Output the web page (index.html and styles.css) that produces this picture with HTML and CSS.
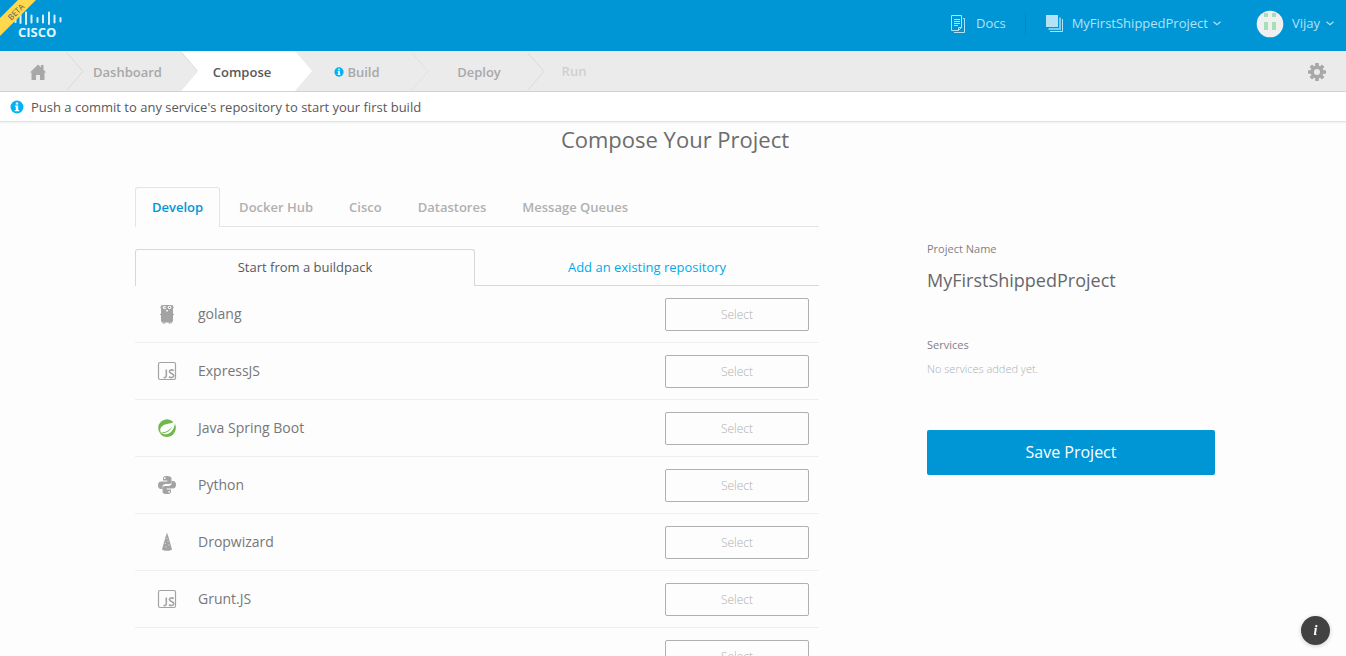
FILE: index.html
```html
<!DOCTYPE html>
<html lang="en">
<head>
<meta charset="utf-8">
<meta name="viewport" content="width=device-width, initial-scale=1">
<title>Compose Your Project</title>
<link rel="stylesheet" href="styles.css">
</head>
<body>
<svg class="sprite" aria-hidden="true">
  <symbol id="chevron" viewBox="0 0 18 39"><path d="M0.500 0.500 17 19.500 0.500 38.500"/></symbol>
  <symbol id="caret" viewBox="0 0 8 5"><path d="M0.500 0.800 4 3.800 7.500 0.800" fill="none" stroke="currentColor" stroke-width="1.200"/></symbol>
  <symbol id="info" viewBox="0 0 14 14"><circle cx="7" cy="7" r="6.500" fill="#00b3f4"/><path d="M5.800 2.500h2.400v2H5.800zM5 5.500h3.200V10H9.200v1.300H4.800V10H5.800V6.800H5z" fill="#fff"/></symbol>
  <symbol id="js" viewBox="0 0 20 20"><rect x="1.500" y="1.500" width="17" height="17" rx="1.500" fill="none" stroke="#a3a3a3" stroke-width="1.200"/><path d="M9.300 8.600v6.200q0 2.200-2.800 1.700M16.700 9.500c-1.600-1-4.300-.7-4.300 1.100 0 2.100 4.400 1.500 4.400 3.900 0 2.200-3 2.500-4.900 1.300" fill="none" stroke="#a3a3a3" stroke-width="1.600"/></symbol>
</svg>
<header class="topbar">
  <a class="brand" href="#" aria-label="Cisco">
    <svg width="66" height="44" viewBox="0 0 66 44">
      <path d="M15.500 18v4M20.500 15v8M26 12.500v11.500M31.500 15.500v7M37.500 18v4M43 15.500v7M49 12.500v11.500M54.500 15.500v7M60.500 18v3.500" stroke="#d9f0fa" stroke-width="2" stroke-linecap="round"/>
      <text class="brand-name" x="18" y="37">CISCO</text>
      <path d="M0 18 18 0H36L0 36Z" fill="#ffd84d"/>
      <text class="beta" transform="translate(18 14) rotate(-45)" text-anchor="middle">BETA</text>
    </svg>
  </a>
  <nav class="account" aria-label="Account">
    <a class="account-link docs" href="#">
      <svg width="16" height="20" viewBox="0 0 16 20" fill="none" stroke="#b3e1f5"><path d="M1.500 1.500h10v12l-3 3h-7zM8.500 16.500v-3h3M13 4.500h1.500v14H4"/><path d="M4 5.500h6M4 7.500h6M4 9.500h6M4 11.500h4"/></svg>
      <span>Docs</span>
    </a>
    <a class="account-link project" href="#">
      <svg width="17" height="17" viewBox="0 0 17 17"><path d="M14 2.500V14H2.500" fill="none" stroke="#80cbea" stroke-width="2"/><path d="M0 0h12v12H0z" fill="#b3e1f5"/><path d="M16.500 4v12.500H4" fill="none" stroke="#b3e1f5"/></svg>
      <span>MyFirstShippedProject</span>
      <svg class="caret" width="8" height="5"><use href="#caret"/></svg>
    </a>
    <a class="account-link user" href="#">
      <svg width="28" height="28" viewBox="0 0 28 28"><circle cx="14" cy="14" r="13.300" fill="#f0f0f0"/><path d="M8 3h4v4H8zM16 3h4v4h-4zM8 12h4v8H8zM16 12h4v8h-4z" fill="#a5dfb7"/></svg>
      <span>Vijay</span>
      <svg class="caret" width="8" height="5"><use href="#caret"/></svg>
    </a>
  </nav>
</header>
<nav class="steps" aria-label="Project steps">
  <a class="step home" href="#" aria-label="Home">
    <svg width="16" height="16" viewBox="0 0 16 16" fill="#a8a8a8"><path d="M8 0.500 11 3.300V1h2.500v4.500L16 8.500h-1.500V16H10v-5H6v5H1.500V8.500H0z"/></svg>
    <svg class="sep" width="18" height="39"><use href="#chevron"/></svg>
  </a>
  <a class="step" href="#">Dashboard<svg class="sep" width="18" height="39"><use href="#chevron"/></svg></a>
  <a class="step current" href="#" aria-current="step">Compose</a>
  <a class="step build" href="#"><svg width="10" height="10"><use href="#info"/></svg>Build<svg class="sep light" width="18" height="39"><use href="#chevron"/></svg></a>
  <a class="step deploy" href="#">Deploy<svg class="sep" width="18" height="39"><use href="#chevron"/></svg></a>
  <a class="step run" href="#">Run</a>
  <button class="settings" type="button" aria-label="Settings">
    <svg width="18" height="18" viewBox="-9 -9 18 18"><g stroke="#a8a8a8" stroke-width="3.600"><path d="M0-9V9M-9 0H9M-6.200-6.200 6.200 6.200M6.200-6.200-6.200 6.200"/></g><circle r="6.500" fill="#a8a8a8"/><circle r="3" fill="#ebebeb"/></svg>
  </button>
</nav>
<div class="notice" role="status">
  <svg width="14" height="14"><use href="#info"/></svg>
  <span>Push a commit to any service's repository to start your first build</span>
</div>
<main class="page">
  <h1>Compose Your Project</h1>
  <div class="columns">
    <section class="catalog">
      <nav class="tabs" aria-label="Service types">
        <a class="tab active" href="#">Develop</a>
        <a class="tab" href="#">Docker Hub</a>
        <a class="tab" href="#">Cisco</a>
        <a class="tab" href="#">Datastores</a>
        <a class="tab" href="#">Message Queues</a>
      </nav>
      <div class="sources">
        <a class="source active" href="#">Start from a buildpack</a>
        <a class="source" href="#">Add an existing repository</a>
      </div>
      <ul class="packs">
        <li class="pack">
          <svg width="20" height="20" viewBox="0 0 20 20"><path d="M4 1.500 6 1h8l2 .5.500 2-.5 1.500V17l-1 1.500H5L4 17V5l-.5-1.500z" fill="#a3a3a3"/><path d="M3 10.500h14M5.500 19h3M11.500 19h3" stroke="#a3a3a3"/><circle cx="7.500" cy="3.500" r="1.800" fill="#f0f0f0"/><circle cx="12.500" cy="3.500" r="1.800" fill="#f0f0f0"/><path d="M9 5.500h2v2H9z" fill="#eee"/><path d="M7.500 3h1v1h-1zM12 3h1v1h-1zM9.500 5h1v1h-1z" fill="#888"/></svg>
          <span>golang</span><button class="select" type="button">Select</button>
        </li>
        <li class="pack">
          <svg width="20" height="20"><use href="#js"/></svg>
          <span>ExpressJS</span><button class="select" type="button">Select</button>
        </li>
        <li class="pack">
          <svg width="20" height="20" viewBox="0 0 20 20"><circle cx="10" cy="10" r="8.800" fill="#70b84d"/><path d="M17.500 2.300C16 6 12 5.300 8 6.600c-4.800 1.700-5.700 5.700-3.800 8.400 3 2.300 8.200 1.500 10.800-1.500 2.600-3.100 3.300-7.300 2.500-11.200z" fill="#fdfdfd"/><path d="M4.500 14.600c4.600-.6 8.200-2.300 11-6.600-2.200 4.900-5.800 7.300-10.800 7.300z" fill="#70b84d"/><path d="M18 7c.8 3.200.3 6.500-2 9-3 3.100-8 3.600-11.500 1 4.800.6 10.500-.6 13.500-10z" fill="#70b84d"/></svg>
          <span>Java Spring Boot</span><button class="select" type="button">Select</button>
        </li>
        <li class="pack">
          <svg width="20" height="20" viewBox="0 0 20 20" fill="#a3a3a3"><path id="snake" d="M10 1C6.700 1 6 2.200 6 3.600v2h4.300v.8H4.200C2 6.400 1 8 1 10.200c0 2.300 1 3.700 3 3.700h1.500v-2.200c0-1.700 1.400-2.800 3-2.800h3.800c1.300 0 2.200-1 2.200-2.200V3.600C14.500 2 13 1 10 1zM7.800 2.300a.9.900 0 1 1 0 1.800.9.900 0 0 1 0-1.800z"/><use href="#snake" transform="rotate(180 10 10)"/></svg>
          <span>Python</span><button class="select" type="button">Select</button>
        </li>
        <li class="pack">
          <svg width="20" height="20" viewBox="0 0 20 20"><path d="M10 .8 11.500 5l3.500 12.500c-1.500 1.800-8.500 1.800-10 0L8.500 5z" fill="#a3a3a3"/><path d="M9.500 6.500h1M10.500 9h1M8 11.500h1M11.500 13h1M8.500 15h1" stroke="#ddd"/></svg>
          <span>Dropwizard</span><button class="select" type="button">Select</button>
        </li>
        <li class="pack">
          <svg width="20" height="20"><use href="#js"/></svg>
          <span>Grunt.JS</span><button class="select" type="button">Select</button>
        </li>
        <li class="pack"><button class="select" type="button">Select</button></li>
      </ul>
    </section>
    <aside class="summary">
      <h2>Project Name</h2>
      <p class="project-name">MyFirstShippedProject</p>
      <h2>Services</h2>
      <p class="empty">No services added yet.</p>
      <button class="save" type="button">Save Project</button>
    </aside>
  </div>
</main>
<button class="help" type="button" aria-label="Help">i</button>
</body>
</html>
```
FILE: styles.css
```css
* { box-sizing: border-box; }
body {
  display: flex;
  flex-direction: column;
  height: 100vh;
  margin: 0;
  overflow: hidden;
  background: #fdfdfd;
  color: #58585b;
  font: 13px/20px "Open Sans", "Noto Sans", sans-serif;
}
a { color: inherit; text-decoration: none; }
button { font: inherit; cursor: pointer; }
svg { flex: none; }
h1, h2, p, ul { margin: 0; padding: 0; font-weight: 400; }
.sprite { position: absolute; width: 0; height: 0; }

.topbar {
  display: flex;
  flex: none;
  justify-content: space-between;
  height: 51px;
  background: #0096d6;
  color: #b3e1f5;
}
.brand-name { fill: #e6f5fb; font-size: 13px; font-weight: 700; }
.beta { fill: #58585b; font-size: 8px; }
.account { display: flex; align-items: center; padding: 0 12px 4px 0; }
.account-link { display: flex; align-items: center; }
.account-link span { padding-bottom: 2px; }
.docs { gap: 10px; padding-right: 19px; border-right: 1px solid #0086c4; }
.project { gap: 9px; padding: 0 35px 0 20px; }
.user { gap: 8px; }
.account-link .caret { margin-left: -4px; }
.user .caret { margin-left: -2px; }

.steps {
  display: flex;
  flex: none;
  height: 41px;
  border-bottom: 1px solid #d0d0d0;
  background: #ebebeb;
  color: #a8a8a8;
  font-weight: 600;
}
.step {
  position: relative;
  display: flex;
  align-items: center;
  justify-content: center;
  width: 115px;
  padding: 2px 0 0 8px;
  gap: 3px;
}
.home { width: 66px; padding-left: 10px; }
.sep { position: absolute; top: 1px; right: -18px; fill: none; stroke: #dadada; }
.sep.light { stroke: #e0e0e0; }
.current {
  width: 131px;
  margin-right: -17px;
  padding-right: 17px;
  background: #fff;
  color: #58585b;
  clip-path: polygon(0 0, 114px 0, 100% 50%, 114px 100%, 0 100%, 17px 50%);
}
.build, .deploy { width: 116px; }
.deploy { padding-left: 20px; }
.run { width: 94px; padding: 0; color: #cfcfcf; }
.settings { margin-left: auto; padding: 2px 20px 0; border: 0; background: none; line-height: 0; }

.notice {
  display: flex;
  flex: none;
  align-items: center;
  gap: 7px;
  height: 30px;
  padding: 0 10px;
  border-bottom: 1px solid #e2e2e2;
  background: #fff;
  box-shadow: 0 1px 2px #eee;
}
.page { padding: 2px 131px 0 135px; }
h1 { color: #6c6c6e; font-size: 22px; line-height: 30px; text-align: center; }
.columns {
  display: grid;
  grid-template-columns: 684fr 288fr;
  gap: 108px;
  padding-top: 33px;
}
.tabs {
  display: flex;
  gap: 2px;
  height: 40px;
  border-bottom: 1px solid #e4e4e4;
  color: #b0b0b0;
  font-weight: 600;
}
.tab { height: 40px; padding: 9px 16px; border: 1px solid transparent; border-bottom: 0; line-height: 20px; }
.tab.active { border-color: #e4e4e4; border-radius: 3px 3px 0 0; background: #fdfdfd; color: #0096d6; }
.sources { display: grid; grid-template-columns: 340fr 344fr; height: 37px; margin-top: 22px; border-bottom: 1px solid #d8d8d8; }
.source { height: 36px; padding: 8px 0; color: #00a9ee; text-align: center; }
.source.active { height: 37px; padding: 7px 0; border: 1px solid #d8d8d8; border-bottom: 0; border-radius: 3px 3px 0 0; background: #fdfdfd; color: #58585b; }
.packs { list-style: none; }
.pack {
  display: flex;
  align-items: center;
  gap: 21px;
  height: 57px;
  padding: 0 10px 0 22px;
  border-bottom: 1px solid #efefef;
  color: #77777a;
  font-size: 14px;
}
.select {
  width: 144px;
  height: 33px;
  margin-left: auto;
  padding: 2px 0 0;
  border: 1px solid #b0b0b0;
  border-radius: 2px;
  background: transparent;
  color: #b0b0b0;
  font-size: 12px;
  font-weight: 300;
}
.summary { padding-top: 52px; }
.summary h2 { color: #818184; font-size: 11px; line-height: 20px; }
.project-name { margin: 8px 0 41px; font-size: 18px; line-height: 27px; color: #67676a; }
.empty { margin-top: 4px; color: #a6b2b9; font-size: 11px; font-weight: 300; line-height: 20px; }
.save {
  width: 100%;
  height: 45px;
  margin-top: 51px;
  padding: 0 0 2px;
  border: 0;
  border-radius: 2px;
  background: #0096d6;
  color: #fff;
  font-size: 16px;
}
.help {
  position: fixed;
  right: 16px;
  bottom: 11px;
  width: 29px;
  height: 29px;
  padding: 0;
  border: 0;
  border-radius: 50%;
  background: #424242;
  box-shadow: 0 1px 4px #ccc;
  color: #fff;
  font: italic 700 14px/29px "Liberation Serif", serif;
}
```
